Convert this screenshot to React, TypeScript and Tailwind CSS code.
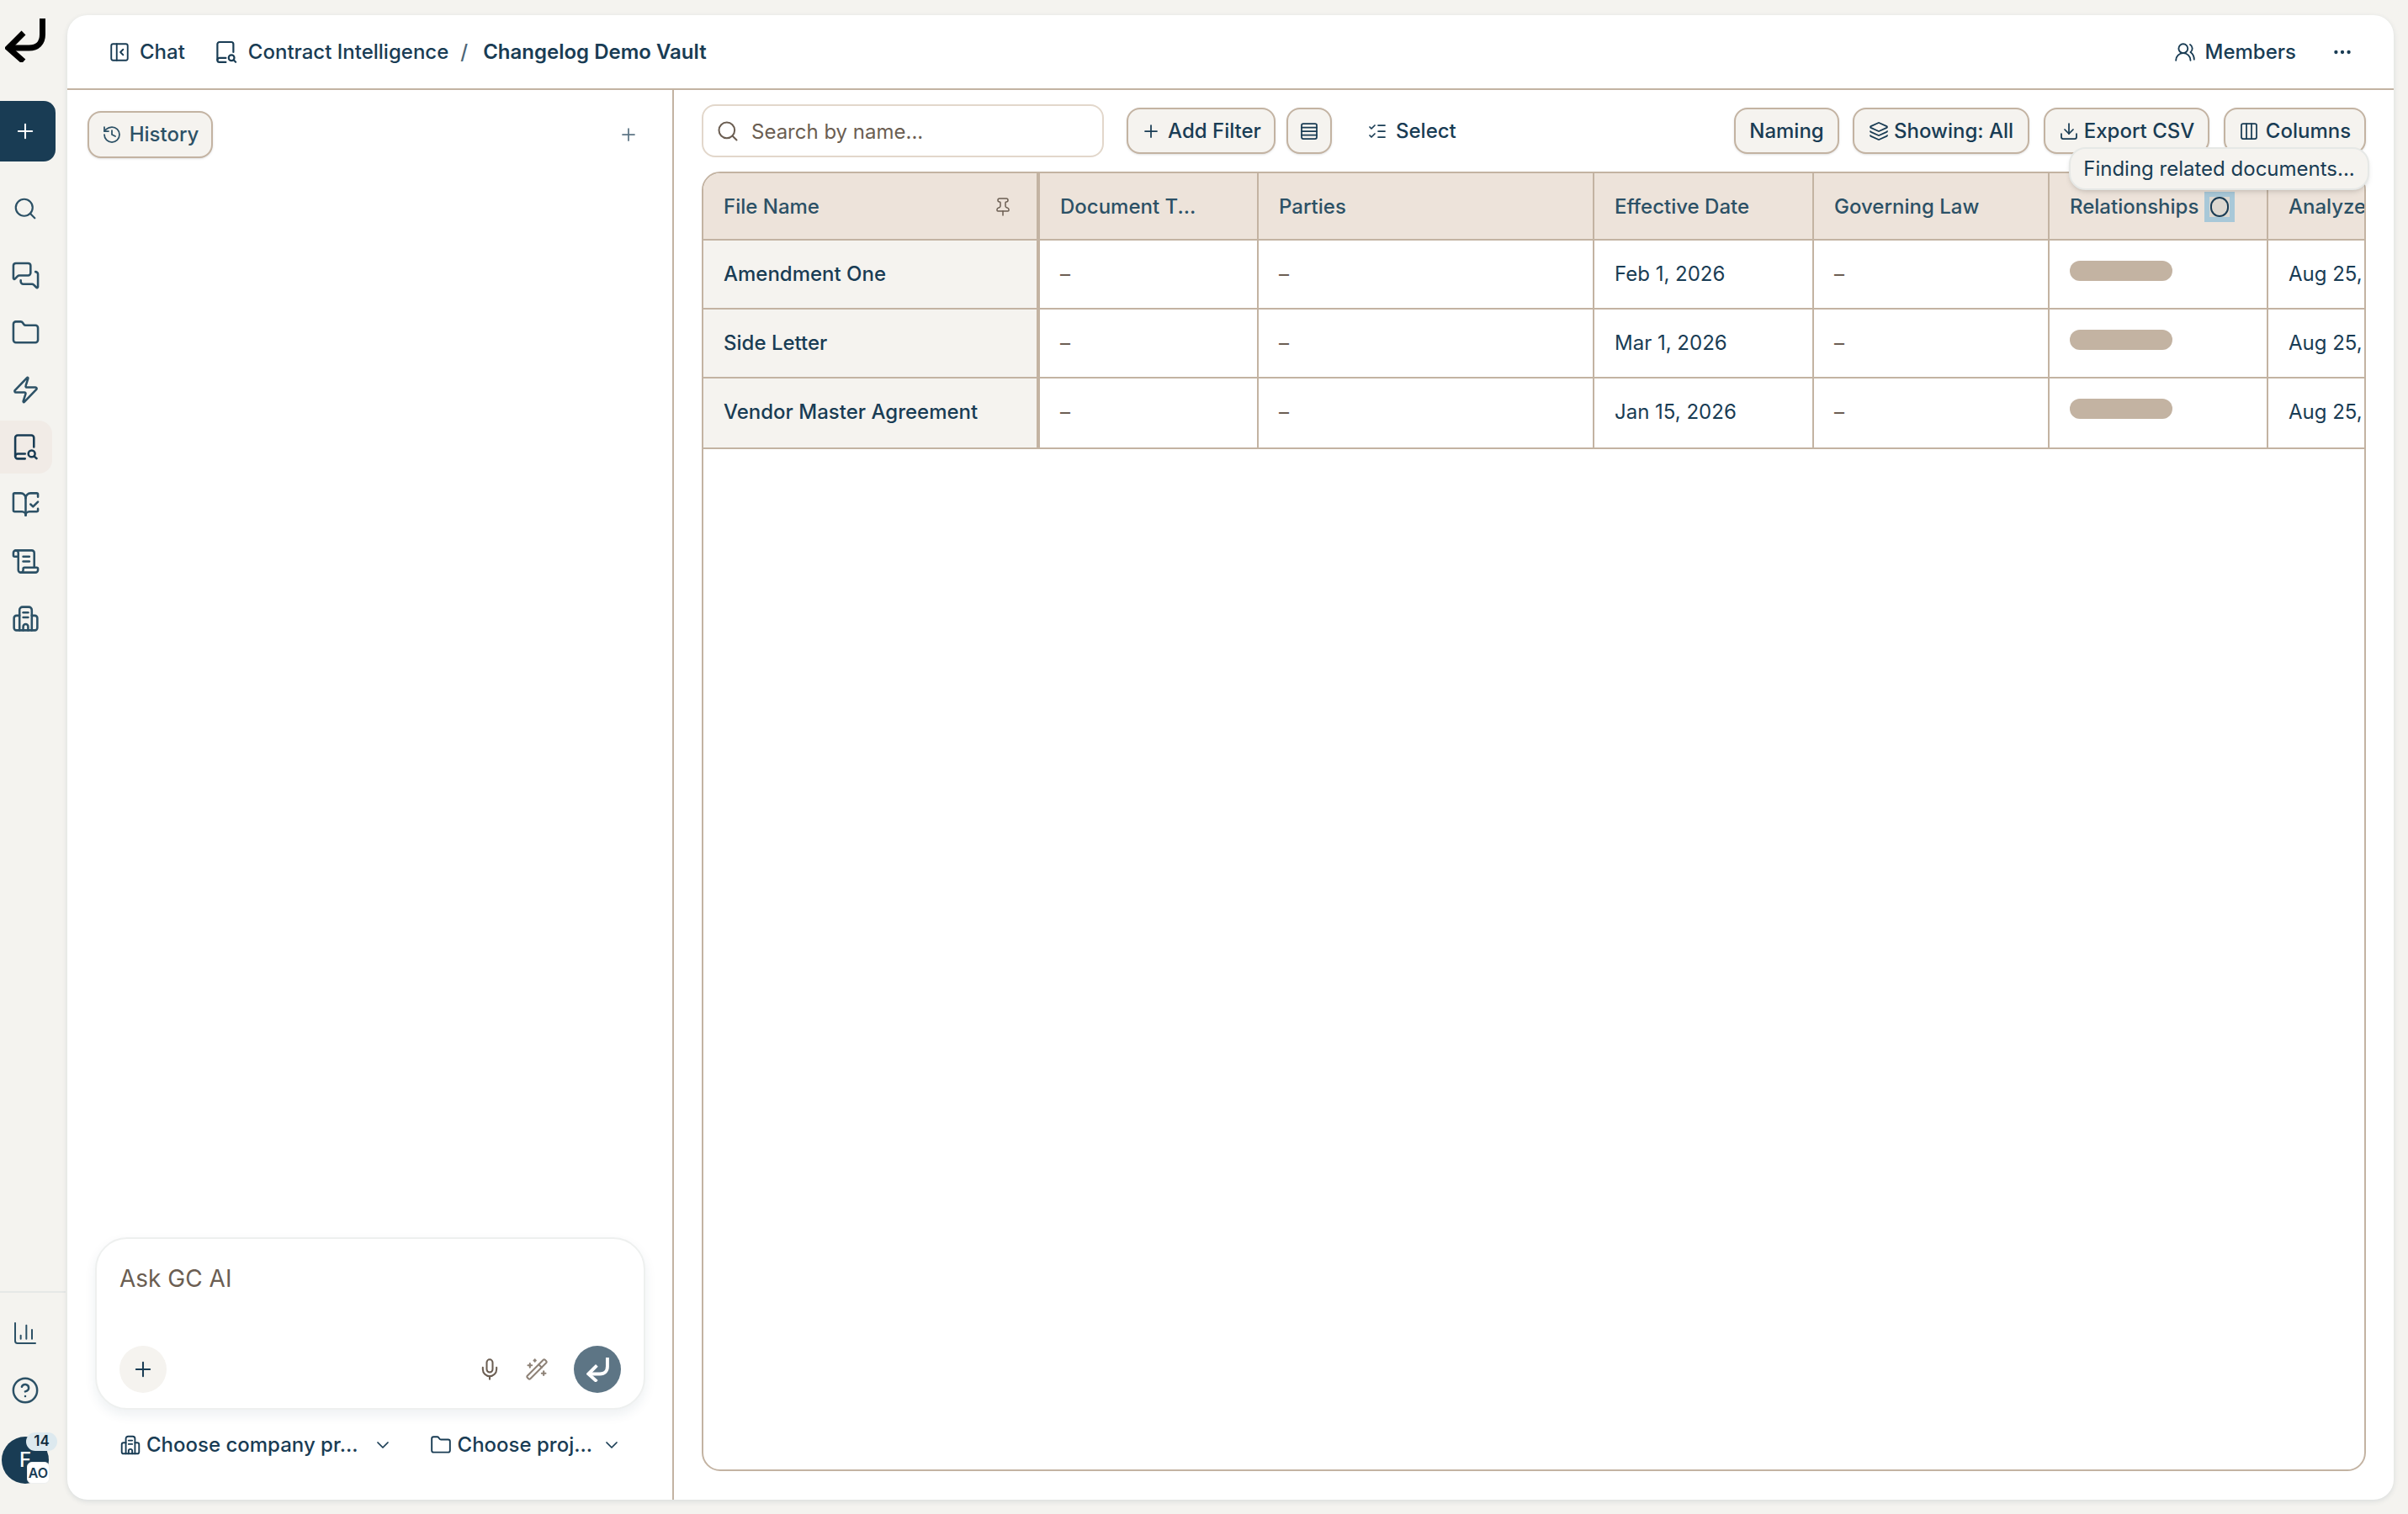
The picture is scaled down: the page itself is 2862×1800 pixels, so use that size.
import {
  BookOpenCheck,
  ChartColumn,
  ChevronDown,
  CircleHelp,
  Columns3,
  Download,
  Ellipsis,
  Folder,
  History,
  Layers,
  ListChecks,
  MessagesSquare,
  Mic,
  PanelLeftClose,
  Pin,
  Plus,
  Rows4,
  ScrollText,
  Search,
  UsersRound,
  WandSparkles,
  Zap,
} from 'lucide-react'

function Logo({ className }: { className?: string }) {
  return (
    <svg viewBox="0 0 48 52" fill="none" stroke="currentColor" strokeWidth="7" className={className}>
      <path d="M44.5 0v19c0 10-6 16-16 16H6" />
      <path d="M22 17 4 35l18 16" />
    </svg>
  )
}

function ContractIcon({ size = 35 }: { size?: number }) {
  return (
    <svg width={size} height={size} viewBox="0 0 24 24" fill="none" stroke="currentColor" strokeWidth="1.75" strokeLinecap="round" strokeLinejoin="round">
      <path d="M18.7 12V4.4a2 2 0 0 0-2-2H5.5a2 2 0 0 0-2 2v15" />
      <path d="M11.5 21.5h-6a2 2 0 0 1-2-2 2 2 0 0 1 2-2h6" />
      <circle cx="16.9" cy="17.4" r="2.7" />
      <path d="m18.9 19.4 2 2" />
    </svg>
  )
}

function CompanyIcon({ size = 35 }: { size?: number }) {
  return (
    <svg width={size} height={size} viewBox="0 0 24 24" fill="none" stroke="currentColor" strokeWidth="1.75" strokeLinecap="round" strokeLinejoin="round">
      <path d="M7 21.5V5a2.5 2.5 0 0 1 2.5-2.5h5A2.5 2.5 0 0 1 17 5v16.5" />
      <path d="M7 9.5H4.5A2 2 0 0 0 2.5 11.5v8a2 2 0 0 0 2 2h15a2 2 0 0 0 2-2v-8a2 2 0 0 0-2-2H17" />
      <path d="M10 7h4" />
      <path d="M10 11h4" />
      <path d="M10 21.5v-3a2 2 0 0 1 4 0v3" />
    </svg>
  )
}

const navItems = [
  { icon: <MessagesSquare size={35} strokeWidth={1.75} /> },
  { icon: <Folder size={35} strokeWidth={1.75} /> },
  { icon: <Zap size={35} strokeWidth={1.75} /> },
  { icon: <ContractIcon />, active: true },
  { icon: <BookOpenCheck size={35} strokeWidth={1.75} /> },
  { icon: <ScrollText size={35} strokeWidth={1.75} /> },
  { icon: <CompanyIcon /> },
]

function Sidebar() {
  return (
    <aside className="flex h-[1800px] w-[80px] shrink-0 flex-col text-[#2c5166]">
      <Logo className="mt-[22px] ml-[6px] h-[52px] w-[48px] text-black" />
      <button className="mt-[46px] flex h-[72px] w-[66px] items-center justify-center rounded-r-[14px] bg-[#193c54] pr-[6px] text-white">
        <Plus size={28} strokeWidth={1.75} />
      </button>
      <div className="mt-[24px] flex h-[63px] w-[62px] items-center justify-center pr-[2px]">
        <Search size={30} strokeWidth={1.75} />
      </div>
      <nav className="mt-[17px] flex flex-col gap-[5px]">
        {navItems.map((item, i) => (
          <div
            key={i}
            className={`flex h-[63px] w-[62px] items-center justify-center rounded-r-[16px] pr-[2px] ${item.active ? 'bg-[#f1ebe6] text-[#193c54]' : ''}`}
          >
            {item.icon}
          </div>
        ))}
      </nav>
      <div className="mt-auto h-[2px] w-[78px] bg-[#e6e8e6]" />
      <div className="mt-[16px] flex h-[63px] w-[60px] items-center justify-center">
        <ChartColumn size={32} strokeWidth={1.5} />
      </div>
      <div className="mt-[5px] flex h-[63px] w-[60px] items-center justify-center">
        <CircleHelp size={34} strokeWidth={1.75} />
      </div>
      <div className="relative mt-[24px] mb-[36px] ml-[2px] h-[56px] w-[56px]">
        <div className="flex h-[56px] w-[56px] items-center justify-center rounded-full bg-[#193c54] text-[24px] font-medium text-white">
          F
        </div>
        <div className="absolute top-[-5px] left-[29px] flex h-[22px] w-[37px] items-center justify-center rounded-full bg-[#dde9ef] text-[17px] font-semibold text-[#0f2a3d]">
          14
        </div>
        <div className="absolute top-[30px] left-[30px] flex h-[26px] w-[27px] items-center justify-center rounded-[6px] border border-[#eef0ef] bg-white text-[16px] font-semibold text-[#193c54]">
          AO
        </div>
      </div>
    </aside>
  )
}

function TopBar() {
  return (
    <header className="flex h-[89px] shrink-0 items-center border-b-2 border-[#c3b3a2] pr-[48px] pl-[49px] text-[24px] font-medium text-[#193c54]">
      <PanelLeftClose size={26} strokeWidth={1.75} />
      <span className="ml-[11px]">Chat</span>
      <span className="ml-[34px] flex items-center gap-[11px]">
        <ContractIcon size={30} />
        Contract Intelligence
      </span>
      <span className="ml-[14px] text-[#4d6678]">/</span>
      <span className="ml-[18px] font-semibold">Changelog Demo Vault</span>
      <div className="ml-auto flex items-center">
        <UsersRound size={26} strokeWidth={1.75} />
        <span className="ml-[11px]">Members</span>
        <Ellipsis size={26} strokeWidth={2} className="ml-[42px]" />
      </div>
    </header>
  )
}

function ChatPanel() {
  return (
    <section className="flex w-[721px] shrink-0 flex-col border-r-2 border-[#c3b3a2]">
      <div className="flex items-center justify-between pt-[25px] pr-[40px] pl-[24px]">
        <button className="flex h-[56px] w-[149px] items-center justify-center gap-[9px] rounded-[16px] border-2 border-[#c3b3a2] bg-[#f5f3ef] text-[24px] font-medium text-[#2c5166] shadow-sm">
          <History size={24} strokeWidth={1.75} />
          History
        </button>
        <Plus size={24} strokeWidth={1.75} className="text-[#5d7585]" />
      </div>
      <div className="mt-auto flex flex-col px-[33px] pb-[47px]">
        <div className="flex h-[205px] w-[654px] flex-col rounded-[38px] border-2 border-[#eef0ef] bg-white px-[27px] pt-[27px] pb-[18px] shadow-[0_6px_14px_rgba(25,60,84,0.08)]">
          <div className="text-[28px] leading-[40px] text-[#6b5e52]">Ask GC AI</div>
          <div className="mt-auto flex items-center">
            <button className="flex h-[56px] w-[56px] items-center justify-center rounded-full bg-[#f5f3ef] text-[#193c54]">
              <Plus size={28} strokeWidth={1.75} />
            </button>
            <Mic size={28} strokeWidth={1.75} className="ml-auto text-[#6b5e52]" />
            <WandSparkles size={28} strokeWidth={1.75} className="ml-[28px] text-[#8d8176]" />
            <button className="ml-[30px] flex h-[56px] w-[56px] items-center justify-center rounded-full bg-[#5d7585] text-white">
              <Logo className="h-[29px] w-[27px]" />
            </button>
          </div>
        </div>
        <div className="mt-[24px] flex h-[36px] items-center text-[24px] font-medium text-[#193c54]">
          <span className="ml-[29px]">
            <CompanyIcon size={26} />
          </span>
          <span className="ml-[6px]">Choose company pr...</span>
          <ChevronDown size={24} strokeWidth={1.75} className="ml-[17px]" />
          <Folder size={26} strokeWidth={1.75} className="ml-[44px]" />
          <span className="ml-[7px]">Choose proj...</span>
          <ChevronDown size={24} strokeWidth={1.75} className="ml-[11px]" />
        </div>
      </div>
    </section>
  )
}

const btn =
  'flex h-[55px] shrink-0 items-center justify-center rounded-[16px] border-2 border-[#c3b3a2] bg-[#f5f3ef] text-[24px] font-medium text-[#193c54] shadow-sm'

function Toolbar() {
  return (
    <div className="relative flex h-[63px] items-center">
      <div className="flex h-[63px] w-[478px] items-center gap-[14px] rounded-[16px] border-2 border-[#e2d7cb] bg-white pl-[15px] text-[24px] text-[#6b5e52]">
        <Search size={28} strokeWidth={1.75} />
        <span className="pt-[2px]">Search by name...</span>
      </div>
      <button className={`${btn} ml-[27px] w-[177px] gap-[8px]`}>
        <Plus size={24} strokeWidth={1.75} />
        Add Filter
      </button>
      <button className={`${btn} ml-[13px] w-[54px]`}>
        <Rows4 size={24} strokeWidth={1.75} />
      </button>
      <div className="ml-[42px] flex items-center gap-[10px] text-[24px] font-medium text-[#193c54]">
        <ListChecks size={24} strokeWidth={1.75} />
        Select
      </div>
      <button className={`${btn} ml-auto w-[125px]`}>Naming</button>
      <button className={`${btn} ml-[16px] w-[210px] gap-[6px]`}>
        <Layers size={24} strokeWidth={1.75} />
        Showing: All
      </button>
      <button className={`${btn} ml-[17px] w-[197px] gap-[6px]`}>
        <Download size={24} strokeWidth={1.75} />
        Export CSV
      </button>
      <button className={`${btn} ml-[17px] w-[169px] gap-[8px]`}>
        <Columns3 size={24} strokeWidth={1.75} />
        Columns
      </button>
      <div className="absolute top-[51px] right-[-4px] z-10 flex h-[51px] w-[357px] items-center justify-center rounded-[20px] border-2 border-[#e6e8e6] bg-[#f5f3ef] text-[24px] text-[#193c54] shadow-md">
        Finding related documents...
      </div>
    </div>
  )
}

const columns = [
  { name: 'File Name', width: 'w-[400px] border-r-4 pl-[24px]' },
  { name: 'Document T...', width: 'w-[260px] border-r-2 pl-[24px]' },
  { name: 'Parties', width: 'w-[399px] border-r-2 pl-[24px]' },
  { name: 'Effective Date', width: 'w-[261px] border-r-2 pl-[24px]' },
  { name: 'Governing Law', width: 'w-[280px] border-r-2 pl-[24px]' },
  { name: 'Relationships', width: 'w-[260px] border-r-2 pl-[24px]' },
  { name: 'Analyzed', width: 'w-[200px] pl-[24px]' },
]

const rows = [
  { name: 'Amendment One', date: 'Feb 1, 2026', h: 'h-[82px]', pad: '' },
  { name: 'Side Letter', date: 'Mar 1, 2026', h: 'h-[82px]', pad: '' },
  { name: 'Vendor Master Agreement', date: 'Jan 15, 2026', h: 'h-[84px]', pad: 'pb-[2px]' },
]

function Cell({ i, cls, children }: { i: number; cls?: string; children?: React.ReactNode }) {
  return (
    <div className={`flex h-full shrink-0 items-center border-[#c3b3a2] ${columns[i].width} ${cls ?? ''}`}>
      {children}
    </div>
  )
}

function VaultTable() {
  return (
    <div className="mt-[17px] flex h-[1545px] flex-col overflow-hidden rounded-[22px] border-2 border-[#c3b3a2] bg-white text-[24px]">
      <div className="flex h-[80px] shrink-0 border-b-2 border-[#c3b3a2] bg-[#ede3da] font-medium text-[#2c5166]">
        {columns.map((col, i) => (
          <Cell key={col.name} i={i} cls="pt-[2px]">
            {col.name}
            {i === 0 && <Pin size={24} strokeWidth={1.5} className="mr-[28px] ml-auto text-[#6b5e52]" />}
            {i === 5 && (
              <span className="ml-[7px] flex h-[36px] w-[36px] items-center justify-center bg-[#ddd8d0] outline-[6px] -outline-offset-[6px] outline-[#a8c8d8]">
                <span className="h-[24px] w-[22px] rounded-full border-2 border-[#193c54]" />
              </span>
            )}
          </Cell>
        ))}
      </div>
      {rows.map((row) => (
        <div key={row.name} className={`flex shrink-0 border-b-2 border-[#c3b3a2] text-[#193c54] ${row.h}`}>
          <Cell i={0} cls={`bg-[#f5f3ef] font-medium ${row.pad}`}>{row.name}</Cell>
          <Cell i={1} cls={row.pad}><span className="text-[#6b5e52]">–</span></Cell>
          <Cell i={2} cls={row.pad}><span className="text-[#6b5e52]">–</span></Cell>
          <Cell i={3} cls={row.pad}>{row.date}</Cell>
          <Cell i={4} cls={row.pad}><span className="text-[#6b5e52]">–</span></Cell>
          <Cell i={5} cls={row.pad}>
            <div className="mb-[8px] h-[24px] w-[122px] rounded-[12px] bg-[#c3b3a2]" />
          </Cell>
          <Cell i={6} cls={row.pad}>Aug 25, 2025</Cell>
        </div>
      ))}
    </div>
  )
}

export default function App() {
  return (
    <div className="flex h-[1800px] w-[2862px] overflow-hidden bg-[#f4f3ef] font-['Inter',sans-serif]">
      <Sidebar />
      <main className="mt-[18px] flex h-[1765px] w-[2765px] shrink-0 flex-col overflow-hidden rounded-[24px] bg-white shadow-[0_2px_6px_rgba(25,60,84,0.12)]">
        <TopBar />
        <div className="flex min-h-0 flex-1">
          <ChatPanel />
          <section className="min-w-0 flex-1 pt-[17px] pr-[33px] pl-[33px]">
            <Toolbar />
            <VaultTable />
          </section>
        </div>
      </main>
    </div>
  )
}
